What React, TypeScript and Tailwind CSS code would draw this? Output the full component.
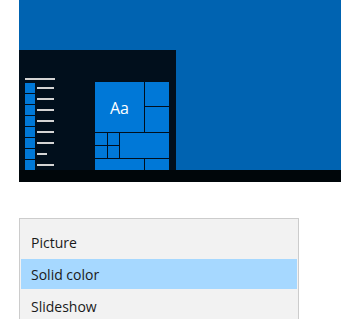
export default function App() {
  const appRows = [17, 17, 17, 17, 17, 17, 10, 17]
  const options = ['Picture', 'Solid color', 'Slideshow']
  const selected = 'Solid color'

  return (
    <div className="w-[341px] h-[319px] bg-white overflow-hidden" style={{ fontFamily: '"Open Sans", "Noto Sans", sans-serif' }}>
      {/* desktop preview */}
      <div className="ml-[19px] w-[322px] h-[182px] flex flex-col">
        <div className="h-[170px] bg-[#0063b1] flex flex-col">
          <div className="h-[50px] shrink-0" />
          <div className="w-[157px] h-[120px] bg-[#010f1c] overflow-hidden pl-[6px] pt-[28px] flex gap-[40px]">
            <div className="flex flex-col w-[30px]">
              <div className="w-[30px] h-[2px] bg-[#d4d4d4]" />
              <div className="mt-[3px] flex flex-col gap-[1px]">
                {appRows.map((w, i) => (
                  <div key={i} className="flex items-center">
                    <div className="w-[10px] h-[10px] bg-[#0078d7]" />
                    <div className="ml-[2px] h-[2px] bg-[#d4d4d4]" style={{ width: w }} />
                  </div>
                ))}
              </div>
            </div>
            <div className="flex flex-col">
              <div className="w-[30px] h-[2px] bg-[#d4d4d4]" />
              <div className="mt-[4px] grid grid-cols-[12px_11px_24px_24px] grid-rows-[24px_25px_12px_12px_24px] gap-[1px]">
                <div className="col-span-3 row-span-2 bg-[#0078d7] flex items-center justify-center pt-[2px] text-white text-[16px] leading-none">
                  Aa
                </div>
                <div className="bg-[#0078d7]" />
                <div className="bg-[#0078d7]" />
                <div className="bg-[#0078d7]" />
                <div className="bg-[#0078d7]" />
                <div className="col-span-2 row-span-2 bg-[#0078d7]" />
                <div className="bg-[#0078d7]" />
                <div className="bg-[#0078d7]" />
                <div className="col-span-3 bg-[#0078d7]" />
                <div className="bg-[#0078d7]" />
              </div>
            </div>
          </div>
        </div>
        <div className="h-[12px] bg-[#00060a]" />
      </div>

      {/* background dropdown list */}
      <div className="mt-[36px] ml-[19px] w-[280px] border border-[#cccccc] bg-[#f2f2f2] pt-[7px] px-[1px]">
        {options.map((o) => (
          <div key={o} className="h-[32px] py-[1px]">
            <div
              className={
                'h-[30px] flex items-center pl-[10px] text-[14px] text-[#1a1a1a] ' +
                (o === selected ? 'bg-[#a6d8ff]' : '')
              }
            >
              {o}
            </div>
          </div>
        ))}
      </div>
    </div>
  )
}
